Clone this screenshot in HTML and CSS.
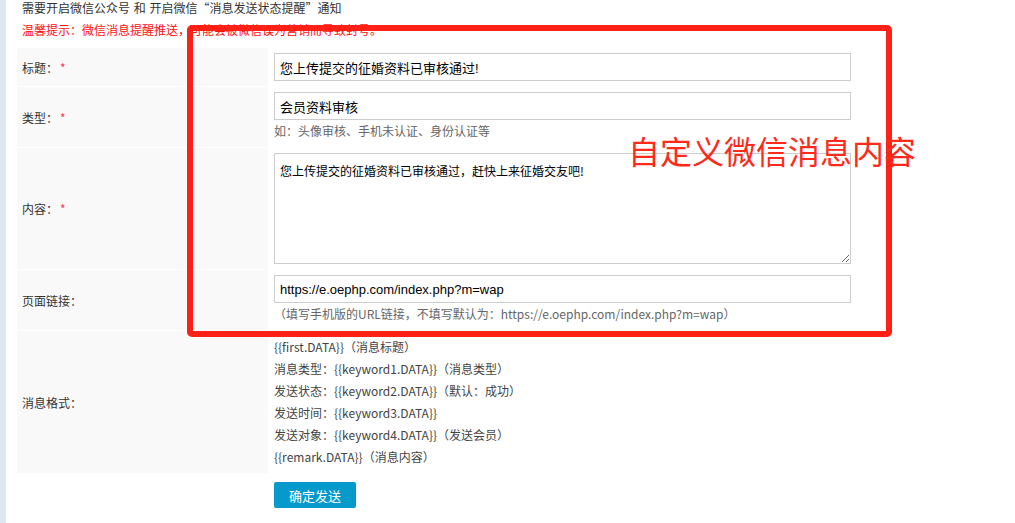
FILE: index.html
```html
<!DOCTYPE html>
<html>
  <head>
    <meta charset="utf-8">
    <link rel="stylesheet" href="styles.css">
  </head>
  <body>
    <div class="page">
      <div class="side-edge"></div>
      <div class="main">
        <p class="tip">需要开启微信公众号 和 开启微信<span class="quote open">“</span>消息发送状态提醒<span class="quote close">”</span>通知</p>
        <p class="tip warn">温馨提示：微信消息提醒推送，可能会被微信误为营销而导致封号。</p>

        <div class="form">
          <div class="row">
            <div class="label">标题：<span class="req">*</span></div>
            <div class="field">
              <input class="text-input" type="text" value="您上传提交的征婚资料已审核通过!">
            </div>
          </div>
          <div class="row">
            <div class="label">类型：<span class="req">*</span></div>
            <div class="field">
              <input class="text-input" type="text" value="会员资料审核">
              <div class="hint">如：头像审核、手机未认证、身份认证等</div>
            </div>
          </div>
          <div class="row">
            <div class="label">内容：<span class="req">*</span></div>
            <div class="field">
              <textarea class="text-area">您上传提交的征婚资料已审核通过，赶快上来征婚交友吧!</textarea>
            </div>
          </div>
          <div class="row">
            <div class="label">页面链接：</div>
            <div class="field">
              <input class="text-input" type="text" value="https://e.oephp.com/index.php?m=wap">
              <div class="hint">（填写手机版的URL链接，不填写默认为：https://e.oephp.com/index.php?m=wap）</div>
            </div>
          </div>
          <div class="row">
            <div class="label">消息格式：</div>
            <div class="field format">
              <div>{{first.DATA}}（消息标题）</div>
              <div>消息类型：{{keyword1.DATA}}（消息类型）</div>
              <div>发送状态：{{keyword2.DATA}}（默认：成功）</div>
              <div>发送时间：{{keyword3.DATA}}</div>
              <div>发送对象：{{keyword4.DATA}}（发送会员）</div>
              <div>{{remark.DATA}}（消息内容）</div>
            </div>
          </div>
          <div class="actions">
            <button class="submit-btn">确定发送</button>
          </div>
        </div>
      </div>
    </div>

    <!-- annotation drawn over the screenshot -->
    <div class="mark-box"></div>
    <div class="mark-text">自定义微信消息内容</div>
  </body>
</html>
```

FILE: styles.css
```css
body {
  margin: 0;
  padding: 0;
  position: relative;
  background: #fff;
  font-family: "Noto Sans CJK SC", "Liberation Sans", sans-serif;
  font-size: 12px;
  color: #333;
}

.page {
  display: flex;
  min-height: 523px;
}

.side-edge {
  width: 6px;
  background: #dfe6ee;
}

.main {
  flex: 1;
  padding-left: 11px;
}

.tip {
  margin: 0;
  padding-left: 5px;
  line-height: 16px;
  word-spacing: 1px;
}

/* full-width quote cells */
.tip .quote {
  display: inline-block;
  width: 12px;
}

.tip .quote.open {
  text-align: right;
}

.tip .quote.close {
  text-align: left;
}

.tip.warn {
  margin-top: 6px;
  color: #ff1010;
}

.form {
  margin-top: 10px;
}

.row {
  display: flex;
}

.label {
  width: 246px;
  padding-left: 5px;
  background: #f9f9f9;
  border-bottom: 1px solid #fff;
  display: flex;
  align-items: center;
}

.req {
  color: #ff3355;
  margin-left: 2px;
}

.field {
  padding: 5px 6px;
  border-bottom: 1px solid #fff;
}

.text-input {
  display: block;
  box-sizing: border-box;
  width: 577px;
  height: 28px;
  margin: 0;
  padding: 0 5px;
  border: 1px solid #ccc;
  font-family: "Liberation Sans", "Noto Sans CJK SC", sans-serif;
  font-size: 13px;
  color: #000;
  outline: none;
}

.text-area {
  display: block;
  box-sizing: border-box;
  width: 577px;
  height: 111px;
  margin: 0;
  padding: 8px 5px;
  border: 1px solid #ccc;
  font-family: "Noto Sans CJK SC", "Liberation Sans", sans-serif;
  font-size: 12px;
  line-height: 18px;
  color: #000;
  resize: vertical;
}

.hint {
  line-height: 22px;
  color: #666;
}

.format {
  line-height: 22px;
  color: #444;
}

.actions {
  padding: 8px 0 0 257px;
}

.submit-btn {
  width: 82px;
  height: 26px;
  border: none;
  border-radius: 2px;
  background: #0599cc;
  color: #fff;
  font-family: "Noto Sans CJK SC", "Liberation Sans", sans-serif;
  font-size: 13px;
  cursor: pointer;
}

.mark-box {
  position: absolute;
  left: 187px;
  top: 25px;
  width: 693px;
  height: 300px;
  border: 6px solid #ff2016;
  border-radius: 5px;
}

.mark-text {
  position: absolute;
  left: 628px;
  top: 128px;
  font-size: 32px;
  line-height: 44px;
  color: #ff2a1a;
}
```
